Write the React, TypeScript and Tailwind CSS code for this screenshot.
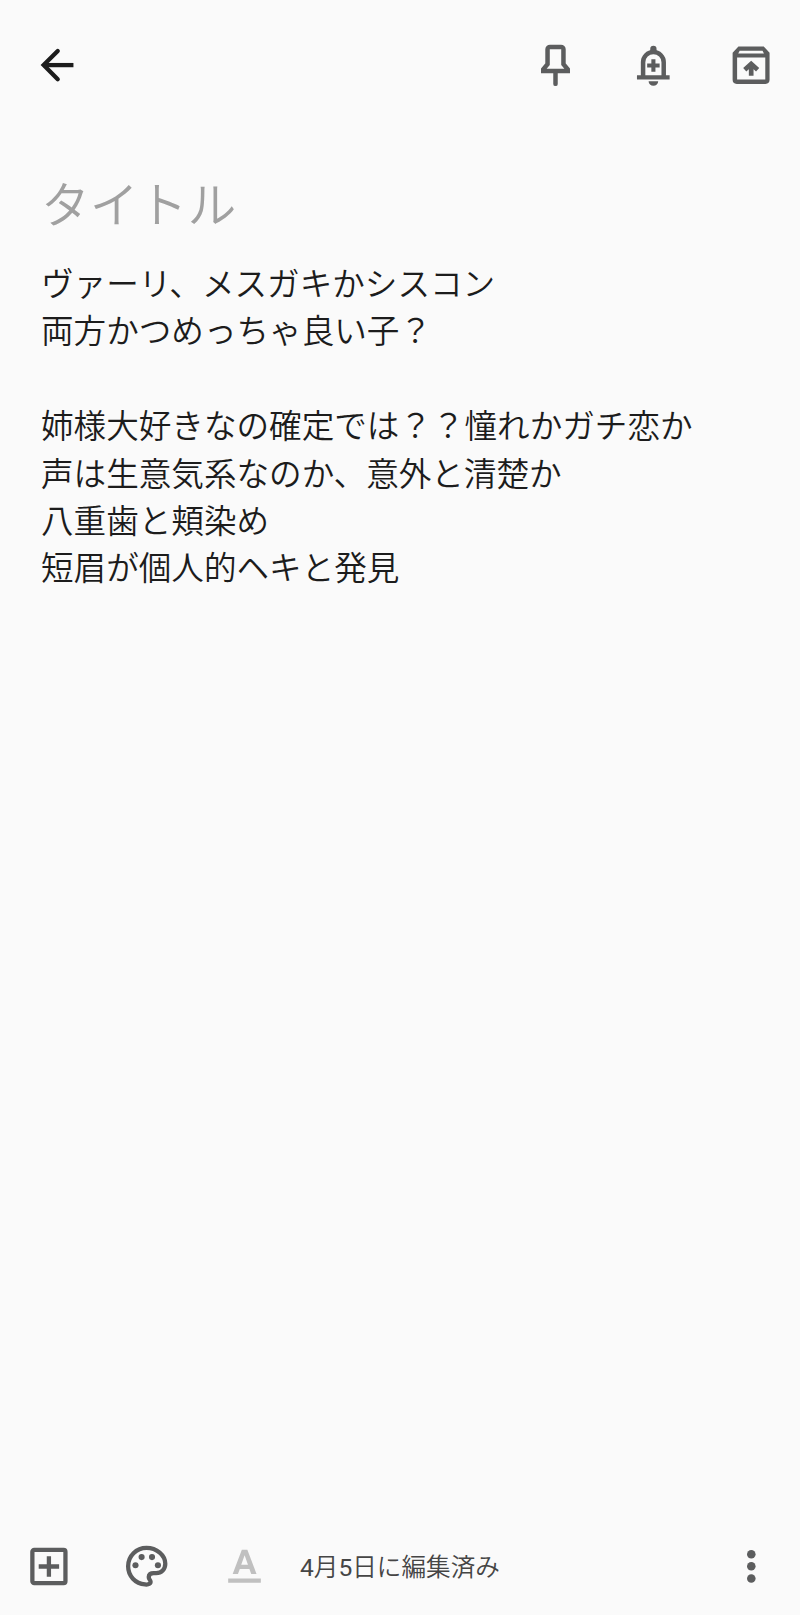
import { ReactElement, ReactNode } from "react";

type IconProps = { className: string; children: ReactNode };

function Icon({ className, children }: IconProps): ReactElement {
  return (
    <svg viewBox="0 0 24 24" fill="currentColor" className={className}>
      {children}
    </svg>
  );
}

const lines: string[] = [
  "ヴァーリ、メスガキかシスコン",
  "両方かつめっちゃ良い子？",
  "",
  "姉様大好きなの確定では？？憧れかガチ恋か",
  "声は生意気系なのか、意外と清楚か",
  "八重歯と頬染め",
  "短眉が個人的ヘキと発見",
];

export default function App(): ReactElement {
  return (
    <div className="flex h-[1615px] w-[800px] flex-col bg-[#fafafa] font-['Noto_Sans_CJK_JP',sans-serif] font-[350] text-[#1c1c1c]">
      <header className="flex h-[130px] items-center justify-between pr-[24px] pl-[32px] text-[#5c5d5e]">
        <button aria-label="戻る">
          <Icon className="size-[49px] text-[#1c1c1c]">
            <g fill="none" stroke="currentColor" strokeWidth="2.1">
              <path d="M12.6 4.900 5.700 11.800l6.900 6.900" strokeLinecap="round" />
              <path d="M5.700 11.800h14.600" />
            </g>
          </Icon>
        </button>
        <div className="flex items-center gap-[49px]">
          <button aria-label="固定">
            <Icon className="size-[49px]">
              <g fill="none" stroke="currentColor" strokeWidth="2.2">
                <path d="M9.3 2.900h5.400A1.2 1.2 0 0 1 15.900 4.100v7.300l2.100 2.500v.8H6v-.8L8.100 11.400V4.100A1.2 1.2 0 0 1 9.300 2.900z" />
                <path d="M12 15.500v5.500" strokeLinecap="round" />
              </g>
            </Icon>
          </button>
          <button aria-label="リマインダー">
            <Icon className="size-[49px]">
              <path d="M9.600 19.700h4.700a2.350 2.250 0 0 1-4.700 0zM3.900 16.800h16v2.100h-16z" />
              <path d="M10.400 5.600V3.900a1.550 1.550 0 0 1 3.100 0v1.700z" />
              <g fill="none" stroke="currentColor">
                <path d="M6.900 17.500v-7.100a5.050 5 0 0 1 10.100 0v7.100" strokeWidth="2.200" />
                <path d="M8.900 12H15M11.950 8.900v6.200" strokeWidth="2" />
              </g>
            </Icon>
          </button>
          <button aria-label="アーカイブ">
            <Icon className="size-[49px]">
              <path
                fillRule="evenodd"
                d="M5.600 2.700H18l2.850 3V19a2 2 0 0 1-2 2H4.750a2 2 0 0 1-2-2V5.700zM6.200 4.800l-.7 1.300h12.600l-.7-1.300zM4.950 8.100v10.800h13.800V8.100z"
              />
              <path
                d="M8.700 14.100l3.150-2.900 3.150 2.900M11.850 11.500v5.500"
                fill="none"
                stroke="currentColor"
                strokeWidth="2.300"
              />
            </Icon>
          </button>
        </div>
      </header>
      <main className="flex-1 px-[41px] pt-[32px]">
        <h1 className="text-[48.8px] leading-[80px] text-[#a0a0a0]">タイトル</h1>
        <div className="mt-[16px] text-[32.6px] leading-[47.4px] whitespace-nowrap">
          {lines.map((line, index) => (
            <p key={index} className="h-[47.4px]">{line}</p>
          ))}
        </div>
      </main>
      <footer className="flex h-[98px] items-center pr-[24px] pl-[24px] text-[#5c5d5e]">
        <button aria-label="追加">
          <Icon className="size-[49px]">
            <g fill="none" stroke="currentColor">
              <rect x="4.100" y="3.900" width="16.200" height="16.200" rx="0.900" strokeWidth="2.100" />
              <path d="M7.200 12h10M12.200 7v10" strokeWidth="2.100" />
            </g>
          </Icon>
        </button>
        <button aria-label="背景" className="ml-[49px]">
          <Icon className="size-[49px]">
            <path
              d="M12 2.900C7 2.900 3 6.900 3 11.900c0 4.700 3.500 8.500 8.300 8.900 1.900.2 3-.5 2.600-1.700-.3-.7-.8-1.100-.8-2 0-1.200.9-1.900 2.400-1.900h1.200c2.700 0 4.500-1.900 4.500-4.500C21.200 6.500 17 2.900 12 2.900z"
              fill="none"
              stroke="currentColor"
              strokeWidth="2.100"
            />
            <circle cx="6.600" cy="11.400" r="1.500" />
            <circle cx="9.600" cy="7.400" r="1.500" />
            <circle cx="14.700" cy="7.400" r="1.500" />
            <circle cx="17.600" cy="11.400" r="1.500" />
          </Icon>
        </button>
        <button aria-label="書式" className="ml-[49px] text-[#c0c0c0]">
          <Icon className="size-[49px]">
            <path
              fillRule="evenodd"
              d="M4 17.900h16v2.100H4zM10.700 3.800 6.200 15.700h2.600l.9-2.500h4.700l.9 2.500h2.600L13.400 3.800zM10.400 11.100 12.050 6.500l1.650 4.600z"
            />
          </Icon>
        </button>
        <span className="mt-[4px] ml-[31px] font-[Roboto,'Noto_Sans_CJK_JP',sans-serif] text-[24.6px] text-[#454545]">
          <span className="font-normal">4</span>月
          <span className="font-normal">5</span>日に編集済み
        </span>
        <button aria-label="その他" className="ml-auto">
          <Icon className="size-[49px]">
            <circle cx="11.900" cy="6" r="2.100" />
            <circle cx="11.900" cy="11.900" r="2.100" />
            <circle cx="11.900" cy="17.900" r="2.100" />
          </Icon>
        </button>
      </footer>
    </div>
  );
}
